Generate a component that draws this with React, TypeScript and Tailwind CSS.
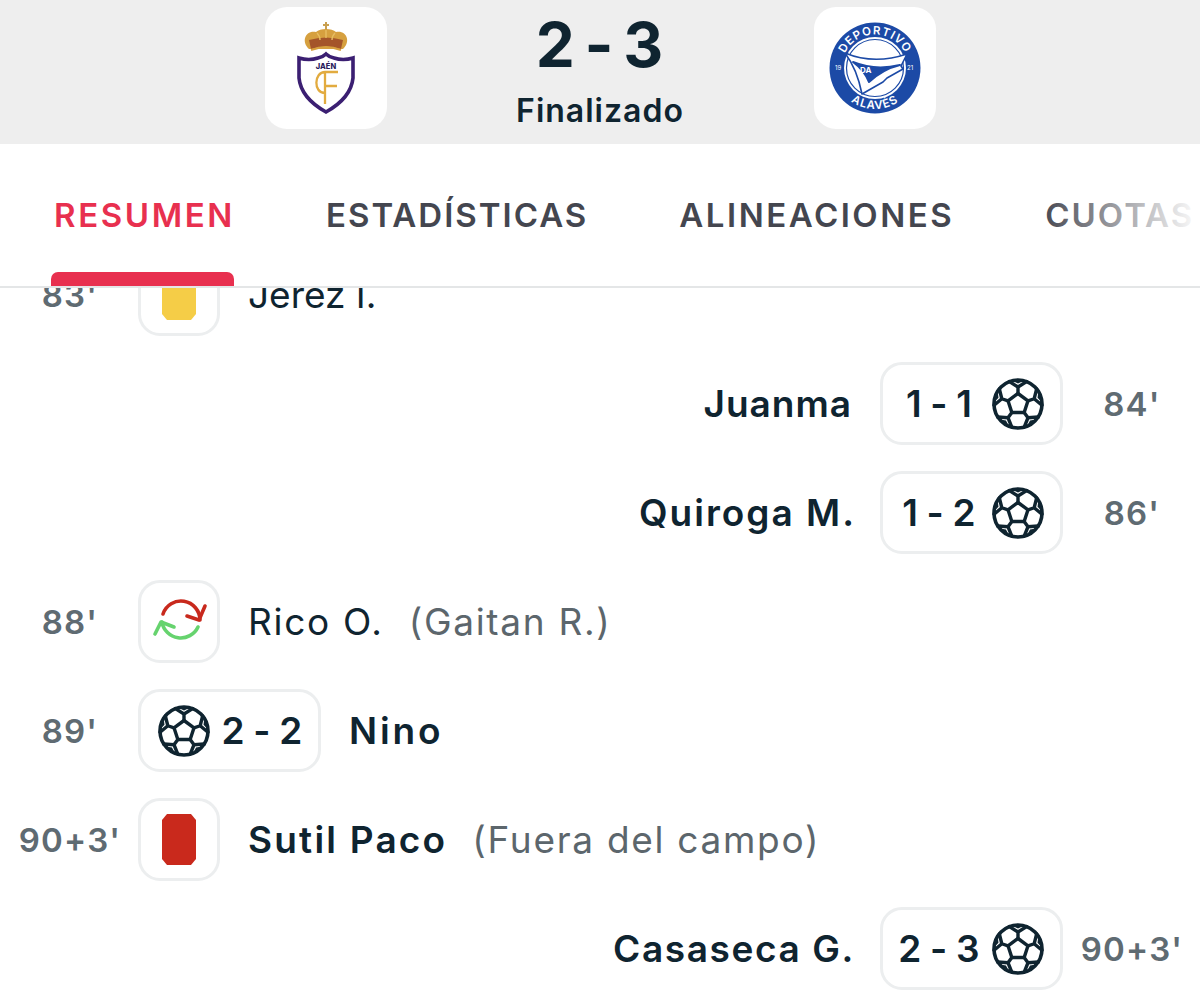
import React from "react";

const pt = (r: number, a: number) => {
  const t = (a * Math.PI) / 180;
  return `${(26 + r * Math.cos(t)).toFixed(2)} ${(26 + r * Math.sin(t)).toFixed(2)}`;
};

function Ball() {
  const angles = [-90, -18, 54, 126, 198];
  const pent = angles.map((a, i) => `${i ? "L" : "M"}${pt(10.5, a)}`).join(" ") + " Z";
  const spokes = angles
    .map((a) => `M${pt(10.5, a)} L${pt(17, a)} M${pt(17, a)} L${pt(24, a - 21)} M${pt(17, a)} L${pt(24, a + 21)}`)
    .join(" ");
  return (
    <svg width="52" height="52" viewBox="0 0 52 52" fill="none" stroke="#0f2430" className="shrink-0">
      <circle cx="26" cy="26" r="24" strokeWidth="3.6" />
      <path d={pent} strokeWidth="3.4" strokeLinejoin="round" />
      <path d={spokes} strokeWidth="3.4" strokeLinecap="round" />
      {angles.map((a) => (
        <path key={`d${a}`} d={`M${pt(24.8, a - 16)} L${pt(24.8, a + 16)} L${pt(20.5, a)} Z`} fill="#0f2430" stroke="none" />
      ))}
    </svg>
  );
}

function CardIcon({ color }: { color: string }) {
  return (
    <svg width="34" height="51" viewBox="0 0 34 51">
      <polygon points="5,0 29,0 34,6 34,45 29,51 5,51 0,45 0,6" fill={color} />
    </svg>
  );
}

function Swap() {
  return (
    <svg width="52" height="46" viewBox="0 0 52 46" fill="none" strokeWidth="3.6" strokeLinecap="round" strokeLinejoin="round" className="ml-[2px] overflow-visible">
      <path d="M9 15 A19 19 0 0 1 46 21" stroke="#c8291d" />
      <path d="M33 17 L45 21 L51 7" stroke="#c8291d" />
      <path d="M44 28 A19 19 0 0 1 8 23" stroke="#66d36e" />
      <path d="M20 28 L7 23 L1 35" stroke="#66d36e" />
    </svg>
  );
}

function JaenCrest() {
  return (
    <svg width="60" height="92" viewBox="0 0 60 92">
      <rect x="29" y="0" width="2" height="8" fill="#c9a050" />
      <rect x="27" y="2" width="6" height="2" fill="#c9a050" />
      <path d="M13 27 C5 20 9 8 20 10 C24 6 36 6 40 10 C51 8 55 20 47 27 Z" fill="#d6a03f" />
      <path d="M15 27 Q30 21 45 27 L47 18 Q30 13 13 18 Z" fill="#a4552a" />
      <path d="M15 28 Q30 23 45 28" fill="none" stroke="#d6a03f" strokeWidth="2" />
      <path d="M30 8 L30 16 M21 11 Q24 14 24 18 M39 11 Q36 14 36 18" stroke="#e7bd62" strokeWidth="1.4" fill="none" />
      <path d="M3 36 Q13 39 22 36 Q27 35 30 32 Q33 35 38 36 Q47 39 57 36 L57 56 Q55 76 30 90 Q5 76 3 56 Z" fill="#fff" stroke="#3b1f72" strokeWidth="3.6" />
      <text x="30" y="47" textAnchor="middle" fontSize="7.5" fontWeight="800" fill="#2a1c5c" fontFamily="Inter, sans-serif">JAÉN</text>
      <path d="M29 50 L29 82 M42 50 L29 50 C18 50 17 71 29 71 M29 64 L41 64" fill="none" stroke="#e2ab3f" strokeWidth="2.3" />
    </svg>
  );
}

function AlavesCrest() {
  return (
    <svg width="92" height="92" viewBox="0 0 92 92">
      <defs>
        <path id="topArc" d="M12.5 46 A33.5 33.5 0 0 1 79.5 46" />
        <path id="botArc" d="M5 46 A41 41 0 0 0 87 46" />
      </defs>
      <circle cx="46" cy="46" r="45.5" fill="#1c4aa6" />
      <circle cx="46" cy="46" r="31" fill="#fff" />
      <circle cx="46" cy="46" r="28.5" fill="none" stroke="#1c4aa6" strokeWidth="1.2" />
      <text fontSize="11.5" fontWeight="600" fill="#fff" letterSpacing="1" fontFamily="Inter, sans-serif" textAnchor="middle">
        <textPath href="#topArc" startOffset="50%">DEPORTIVO</textPath>
      </text>
      <text fontSize="11.5" fontWeight="600" fill="#fff" letterSpacing="1" fontFamily="Inter, sans-serif" textAnchor="middle">
        <textPath href="#botArc" startOffset="50%">ALAVÉS</textPath>
      </text>
      <text x="6" y="48" fontSize="6" fill="#fff" fontFamily="Inter, sans-serif">19</text>
      <text x="78" y="48" fontSize="6" fill="#fff" fontFamily="Inter, sans-serif">21</text>
      <path d="M16 31 Q45 43 78 32 L72 44 L74 47 L58 56 L54 60 L33 72 Q28 47 16 31 Z" fill="#fff" stroke="#1c4aa6" strokeWidth="1.6" strokeLinejoin="round" />
      <path d="M24 40 Q46 49 71 43 Q54 47 40 60 Q35 48 24 40 Z" fill="#1c4aa6" stroke="#1c4aa6" strokeWidth="2" strokeLinejoin="round" />
      <text x="31" y="51" fontSize="8" fontWeight="700" fill="#fff" fontFamily="Inter, sans-serif">DA</text>
    </svg>
  );
}

const badge = "h-[83px] rounded-[22px] border-[3px] border-[#eceeef] bg-white flex items-center shrink-0";
const scoreBadge = `${badge} w-[183px] text-[37px] font-semibold text-[#0f2430]`;
const scoreText = "w-[84px] text-center pt-[1px] tracking-[0.2px] [word-spacing:-1px] whitespace-nowrap";
const minute = "text-[33px] font-semibold text-[#5f6b72] text-center tracking-[1.2px] pt-[2px] whitespace-nowrap";
const tab = "text-[33px] font-semibold text-[#44464f] whitespace-nowrap pt-[2px]";

function LeftRow({ min, icon, children }: { min: string; icon: React.ReactNode; children: React.ReactNode }) {
  return (
    <div className="flex items-center h-[83px]">
      <div className={`${minute} w-[138px] shrink-0 pl-[2px]`}>{min}</div>
      {icon}
      <div className="ml-[28px] flex items-center gap-[25px] text-[37px] text-[#0f2430] tracking-[1.7px] pt-[1px] whitespace-nowrap">{children}</div>
    </div>
  );
}

function IconBadge({ children }: { children: React.ReactNode }) {
  return <div className={`${badge} w-[82px] justify-center`}>{children}</div>;
}

function RightRow({ min, score, name, spacing }: { min: string; score: string; name: string; spacing: string }) {
  return (
    <div className="flex items-center justify-end h-[83px]">
      <div className={`text-[37px] font-semibold text-[#0f2430] pt-[1px] whitespace-nowrap ${spacing}`}>{name}</div>
      <div className={`${scoreBadge} pl-[14px] gap-[11px]`}>
        <span className={scoreText}>{score}</span>
        <Ball />
      </div>
      <div className={`${minute} w-[137px] shrink-0 pl-[1px]`}>{min}</div>
    </div>
  );
}

export default function App() {
  return (
    <div className="w-[1200px] h-[1000px] overflow-hidden bg-white flex flex-col font-['Inter',sans-serif]">
      <header className="h-[144px] shrink-0 bg-[#eeeeee] flex justify-center pt-[7px]">
        <div className="w-[122px] h-[122px] rounded-[22px] bg-white flex items-center justify-center">
          <JaenCrest />
        </div>
        <div className="w-[427px] flex flex-col items-center">
          <div className="h-[76px] text-[62px] leading-[76px] font-bold tracking-[1px] [word-spacing:-7px] text-[#0f2430]">2 - 3</div>
          <div className="text-[32px] leading-[40px] mt-[8px] font-semibold tracking-[1px] text-[#0f2430]">Finalizado</div>
        </div>
        <div className="w-[122px] h-[122px] rounded-[22px] bg-white flex items-center justify-center">
          <AlavesCrest />
        </div>
      </header>

      <nav className="relative z-10 h-[144px] shrink-0 bg-white border-b-2 border-[#e4e6e7] flex items-center pl-[51px] overflow-hidden">
        <div className="relative h-full flex items-center mr-[92px] pl-[3px] w-[183px]">
          <span className="text-[33px] font-semibold tracking-[2.6px] text-[#e8304f] whitespace-nowrap pt-[2px]">RESUMEN</span>
          <span className="absolute left-0 right-0 bottom-0 h-[14px] rounded-t-[7px] bg-[#e8304f]" />
        </div>
        <span className={`${tab} tracking-[2px] mr-[91px]`}>ESTADÍSTICAS</span>
        <span className={`${tab} tracking-[2.5px] mr-[91px]`}>ALINEACIONES</span>
        <span className={`${tab} tracking-[2px]`}>CUOTAS</span>
        <span className="absolute right-0 top-0 bottom-0 w-[160px] bg-gradient-to-r from-white/0 to-white" />
      </nav>

      <main className="flex-1 min-h-0 overflow-hidden">
        <div className="flex flex-col gap-[26px] mt-[-35px]">
          <LeftRow min="83'" icon={<IconBadge><CardIcon color="#f5cd47" /></IconBadge>}>
            <span className="tracking-[0px]">Jerez I.</span>
          </LeftRow>
          <RightRow min="84'" score="1 - 1" name="Juanma" spacing="mr-[28px] tracking-[1px]" />
          <RightRow min="86'" score="1 - 2" name="Quiroga M." spacing="mr-[24px] tracking-[2px]" />
          <LeftRow min="88'" icon={<IconBadge><Swap /></IconBadge>}>
            <span>Rico O.</span>
            <span className="text-[#5c666c]">(Gaitan R.)</span>
          </LeftRow>
          <LeftRow
            min="89'"
            icon={
              <div className={`${scoreBadge} pl-[17px] gap-[10px]`}>
                <Ball />
                <span className={scoreText}>2 - 2</span>
              </div>
            }
          >
            <span className="font-semibold tracking-[2.9px]">Nino</span>
          </LeftRow>
          <LeftRow min="90+3'" icon={<IconBadge><CardIcon color="#c9291c" /></IconBadge>}>
            <span className="font-semibold tracking-[2.2px]">Sutil Paco</span>
            <span className="text-[#5c666c]">(Fuera del campo)</span>
          </LeftRow>
          <RightRow min="90+3'" score="2 - 3" name="Casaseca G." spacing="mr-[25px] tracking-[1.6px]" />
        </div>
      </main>
    </div>
  );
}
